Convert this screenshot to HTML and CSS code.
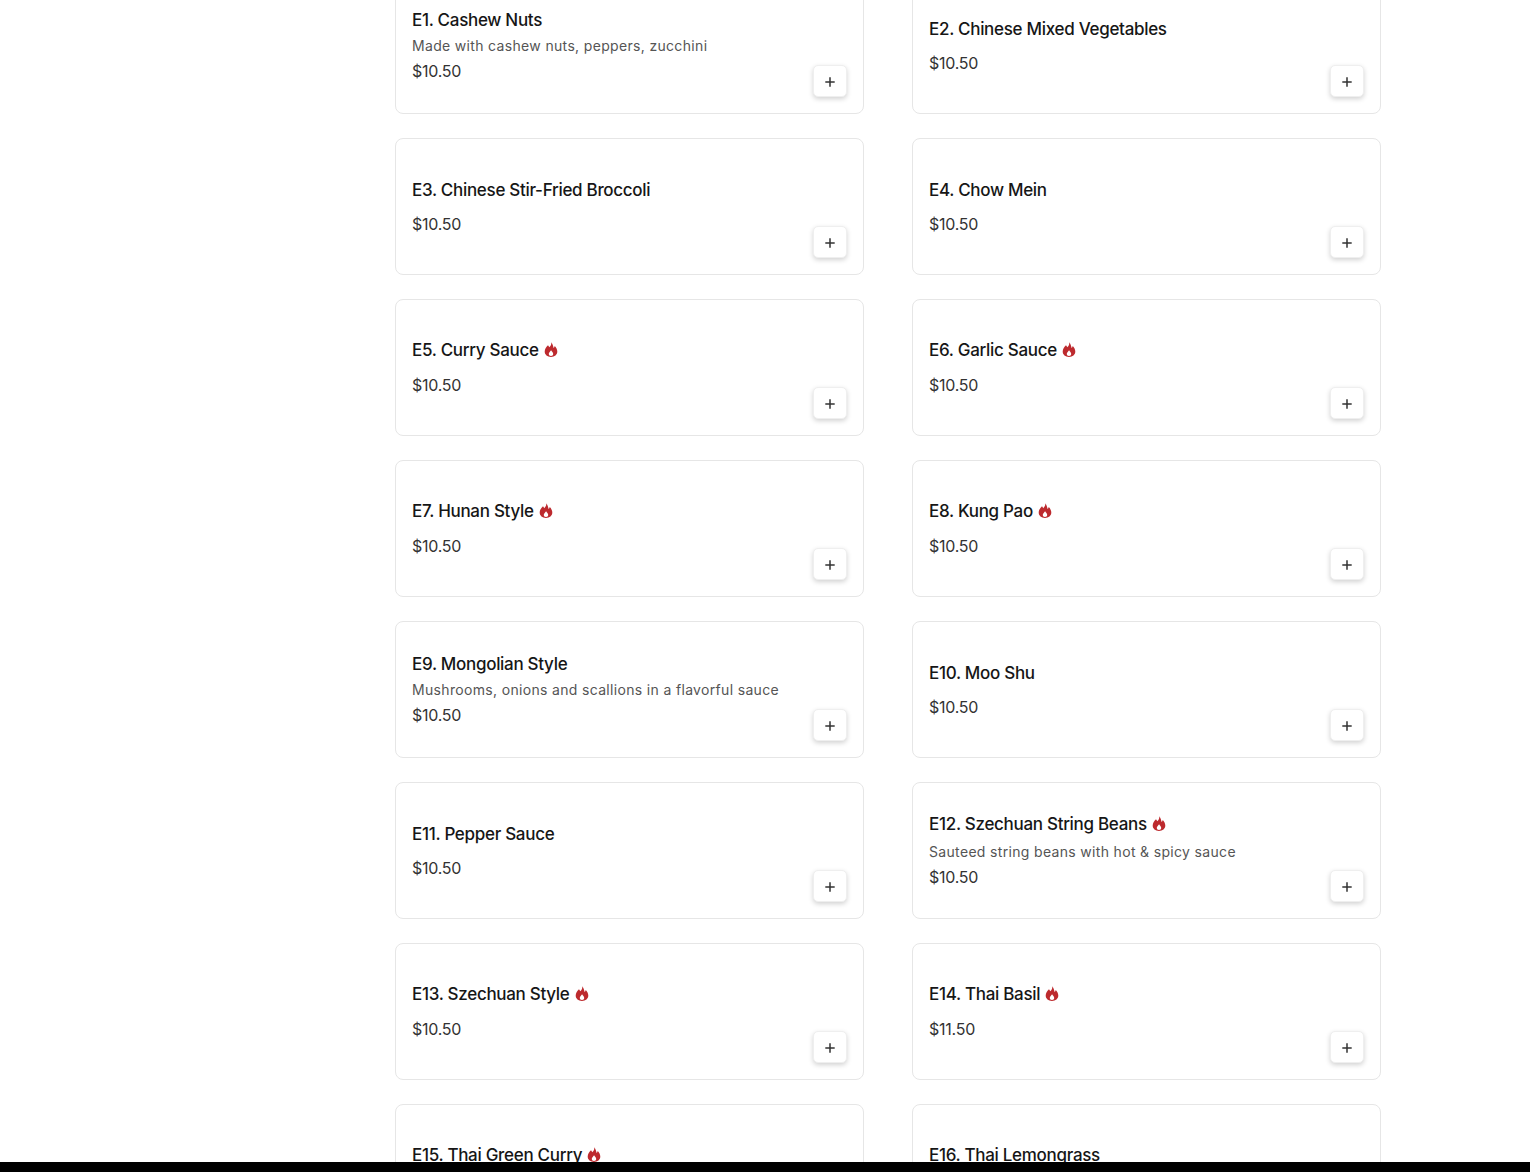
FILE: index.html
```html
<!DOCTYPE html>
<html lang="en">
<head>
<meta charset="utf-8">
<title>Menu</title>
<link rel="stylesheet" href="styles.css">
</head>
<body>
<svg class="defs" width="0" height="0" aria-hidden="true">
  <symbol id="fire" viewBox="0 0 14 15"><path fill-rule="evenodd" d="M7.200.2C7.700 2.400 6.700 3.700 5.200 5.300 4.900 4.600 4.600 4 4 3.300 2.300 5 .7 6.900.7 9.500c0 3.200 2.700 5.400 6.300 5.400s6.300-2.200 6.300-5.400c0-1.900-1.100-3.900-2.500-5.400-.3.900-.7 1.500-1.300 2C9.300 3.900 8.500 1.700 7.200.2ZM7 13.900c-1.300 0-2.200-.8-2.200-2 0-1.300 1.200-2.200 2.300-3.700.8 1.200 2.100 2.300 2.100 3.700 0 1.200-.9 2-2.200 2Z"/></symbol>
  <symbol id="plus" viewBox="0 0 12 12"><path d="M6 1.300v9.400M1.300 6h9.400" fill="none" stroke="currentColor" stroke-width="1.500"/></symbol>
</svg>
<main class="menu">
  <article class="card"><div class="info"><h3 class="name">E1. Cashew Nuts</h3><p class="desc">Made with cashew nuts, peppers, zucchini</p><p class="price">$10.50</p></div><button class="add" aria-label="Add"><svg class="plus"><use href="#plus"/></svg></button></article>
  <article class="card"><div class="info"><h3 class="name">E2. Chinese Mixed Vegetables</h3><p class="price">$10.50</p></div><button class="add" aria-label="Add"><svg class="plus"><use href="#plus"/></svg></button></article>
  <article class="card"><div class="info"><h3 class="name">E3. Chinese Stir-Fried Broccoli</h3><p class="price">$10.50</p></div><button class="add" aria-label="Add"><svg class="plus"><use href="#plus"/></svg></button></article>
  <article class="card"><div class="info"><h3 class="name">E4. Chow Mein</h3><p class="price">$10.50</p></div><button class="add" aria-label="Add"><svg class="plus"><use href="#plus"/></svg></button></article>
  <article class="card"><div class="info"><h3 class="name spicy">E5. Curry Sauce <svg class="flame"><use href="#fire"/></svg></h3><p class="price">$10.50</p></div><button class="add" aria-label="Add"><svg class="plus"><use href="#plus"/></svg></button></article>
  <article class="card"><div class="info"><h3 class="name spicy">E6. Garlic Sauce <svg class="flame"><use href="#fire"/></svg></h3><p class="price">$10.50</p></div><button class="add" aria-label="Add"><svg class="plus"><use href="#plus"/></svg></button></article>
  <article class="card"><div class="info"><h3 class="name spicy">E7. Hunan Style <svg class="flame"><use href="#fire"/></svg></h3><p class="price">$10.50</p></div><button class="add" aria-label="Add"><svg class="plus"><use href="#plus"/></svg></button></article>
  <article class="card"><div class="info"><h3 class="name spicy">E8. Kung Pao <svg class="flame"><use href="#fire"/></svg></h3><p class="price">$10.50</p></div><button class="add" aria-label="Add"><svg class="plus"><use href="#plus"/></svg></button></article>
  <article class="card"><div class="info"><h3 class="name">E9. Mongolian Style</h3><p class="desc">Mushrooms, onions and scallions in a flavorful sauce</p><p class="price">$10.50</p></div><button class="add" aria-label="Add"><svg class="plus"><use href="#plus"/></svg></button></article>
  <article class="card"><div class="info"><h3 class="name">E10. Moo Shu</h3><p class="price">$10.50</p></div><button class="add" aria-label="Add"><svg class="plus"><use href="#plus"/></svg></button></article>
  <article class="card"><div class="info"><h3 class="name">E11. Pepper Sauce</h3><p class="price">$10.50</p></div><button class="add" aria-label="Add"><svg class="plus"><use href="#plus"/></svg></button></article>
  <article class="card"><div class="info"><h3 class="name spicy">E12. Szechuan String Beans <svg class="flame"><use href="#fire"/></svg></h3><p class="desc">Sauteed string beans with hot &amp; spicy sauce</p><p class="price">$10.50</p></div><button class="add" aria-label="Add"><svg class="plus"><use href="#plus"/></svg></button></article>
  <article class="card"><div class="info"><h3 class="name spicy">E13. Szechuan Style <svg class="flame"><use href="#fire"/></svg></h3><p class="price">$10.50</p></div><button class="add" aria-label="Add"><svg class="plus"><use href="#plus"/></svg></button></article>
  <article class="card"><div class="info"><h3 class="name spicy">E14. Thai Basil <svg class="flame"><use href="#fire"/></svg></h3><p class="price">$11.50</p></div><button class="add" aria-label="Add"><svg class="plus"><use href="#plus"/></svg></button></article>
  <article class="card card-cut"><div class="info"><h3 class="name spicy">E15. Thai Green Curry <svg class="flame"><use href="#fire"/></svg></h3></div></article>
  <article class="card card-cut"><div class="info"><h3 class="name">E16. Thai Lemongrass</h3></div></article>
</main>
<div class="bottom-bar"></div>
</body>
</html>
```
FILE: styles.css
```css
html, body {
  margin: 0;
  height: 100%;
  overflow: hidden;
  background: #fff;
}
body {
  font-family: Inter, "Liberation Sans", sans-serif;
  color: #1a1a1a;
}
.defs { display: block; height: 0; }
.menu {
  display: grid;
  grid-template-columns: 469px 469px;
  grid-auto-rows: 137px;
  column-gap: 48px;
  row-gap: 24px;
  margin-top: -23px;
  padding-left: 395px;
}
.card {
  display: flex;
  align-items: center;
  justify-content: space-between;
  box-sizing: border-box;
  padding: 16px;
  background: #fff;
  border: 1px solid #e6e6e6;
  border-radius: 8px;
}
.card-cut {
  align-items: flex-start;
  padding-top: 38px;
}
.info { min-width: 0; }
.name {
  margin: 0;
  padding-top: 1px;
  display: flex;
  align-items: center;
  gap: 5px;
  font-size: 17px;
  font-weight: 500;
  line-height: 23px;
  letter-spacing: -.3px;
  color: #161616;
}
.name.spicy {
  align-items: flex-start;
  height: 25px;
  padding-top: 0;
  line-height: 24px;
}
.flame {
  width: 14px;
  height: 15px;
  margin-top: 4px;
  fill: #bd2a2e;
}
.desc {
  margin: 4px 0 3px;
  font-size: 14px;
  line-height: 20px;
  letter-spacing: .33px;
  color: #555;
}
.spicy + .desc { margin-top: 5px; }
.price {
  margin: 0;
  font-size: 16px;
  line-height: 24px;
  letter-spacing: -.25px;
  color: #333;
}
.name + .price { margin-top: 10px; }
.add {
  display: flex;
  align-items: center;
  justify-content: center;
  align-self: flex-end;
  flex: none;
  width: 34px;
  height: 32px;
  padding: 1px 0 0;
  background: #fff;
  border: 1px solid #efefef;
  border-radius: 5px;
  box-shadow: 0 2px 5px rgba(0, 0, 0, .18);
  color: #333;
}
.plus {
  width: 12px;
  height: 12px;
}
.bottom-bar {
  position: fixed;
  left: 0;
  right: 0;
  bottom: 0;
  height: 10px;
  background: #000;
}
```
